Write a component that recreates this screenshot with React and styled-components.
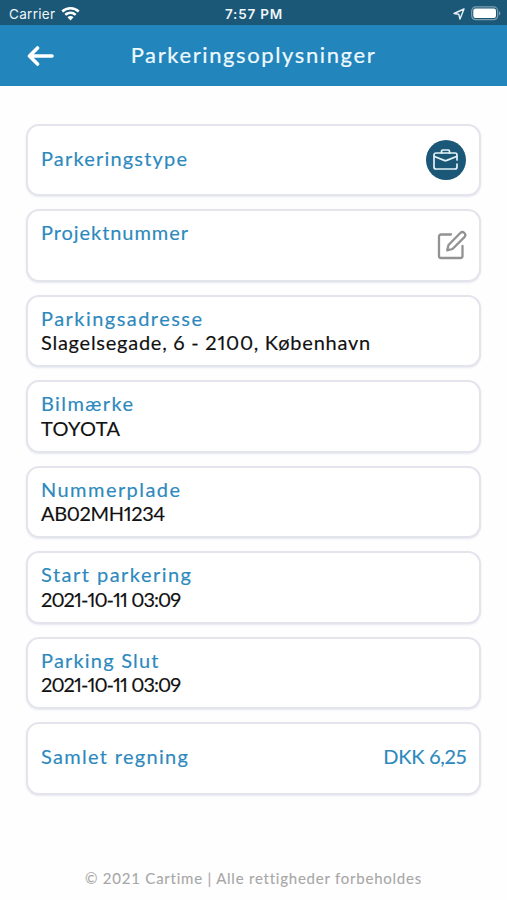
import React from 'react';
import styled, { createGlobalStyle } from 'styled-components';

const GlobalStyle = createGlobalStyle`
  * { box-sizing: border-box; }
  body { margin: 0; background: #fefefe; overflow: hidden; }
`;

const Screen = styled.div`
  display: flex;
  flex-direction: column;
  width: 507px;
  height: 900px;
  background: #fefefe;
  font-family: Lato, "Open Sans", sans-serif;
`;

const StatusBar = styled.div`
  display: grid;
  grid-template-columns: 1fr auto 1fr;
  align-items: center;
  height: 25px;
  padding: 2px 6px 0 9px;
  background: #1b5776;
  color: #eef6fa;
  font: 400 13.5px/20px Inter, "Liberation Sans", sans-serif;
`;

const StatusGroup = styled.div`
  display: flex;
  align-items: center;
  gap: 6px;
  justify-content: ${(p) => (p.$end ? 'flex-end' : 'flex-start')};
`;

const Carrier = styled.span`
  letter-spacing: 0.3px;
`;

const Clock = styled.span`
  font-weight: 600;
  font-size: 13.5px;
  letter-spacing: 0.8px;
  margin-right: 2px;
`;

const Header = styled.header`
  display: grid;
  grid-template-columns: 54px 1fr 54px;
  align-items: center;
  height: 61px;
  background: #2285bc;
  color: #eefaff;
`;

const BackButton = styled.button`
  display: flex;
  justify-content: flex-end;
  padding: 0;
  border: 0;
  background: none;
  color: #fff;
`;

const Title = styled.h1`
  margin: 0;
  padding-bottom: 2px;
  text-align: center;
  font-size: 22px;
  line-height: 26px;
  font-weight: 400;
  letter-spacing: 1.61px;
  white-space: nowrap;
  -webkit-text-stroke: 0.2px currentColor;
`;

const CardList = styled.main`
  display: flex;
  flex-direction: column;
  gap: 13px;
  padding: 37.9px 25.6px 0 26px;
`;

const Card = styled.section`
  display: flex;
  justify-content: space-between;
  height: 72.5px;
  padding: ${(p) => (p.$single ? '20px' : '9px')} 13px 0 13px;
  border: 2px solid #e4e4ec;
  border-radius: 13px;
  background: #fff;
  box-shadow: 0 1px 2px rgba(215, 215, 235, 0.6);
`;

const Field = styled.div`
  display: flex;
  flex-direction: column;
`;

const Text = styled.span`
  font-size: 20px;
  line-height: 24.5px;
  font-variant-numeric: proportional-nums;
  letter-spacing: ${(p) => p.$spacing}px;
  white-space: nowrap;
  -webkit-text-stroke: 0.15px currentColor;
`;

const Label = styled(Text)`
  color: #2d89bd;
`;

const Value = styled(Text)`
  color: #111;
`;

const Badge = styled.div`
  display: grid;
  place-items: center;
  width: 40px;
  height: 40px;
  margin: -6px 0.4px 0 0;
  border-radius: 50%;
  background: #1b5776;
`;

const EditButton = styled.button`
  display: flex;
  align-self: flex-start;
  margin: 10px -0.5px 0 0;
  padding: 0;
  border: 0;
  background: none;
`;

const Footer = styled.footer`
  margin-top: auto;
  padding-bottom: 12px;
  text-align: center;
  color: #a7a7a7;
  font-size: 15px;
  line-height: 20px;
  letter-spacing: 0.77px;
  white-space: nowrap;
  -webkit-text-stroke: 0.1px currentColor;
`;

const WifiIcon = () => (
  <svg width="19" height="14" viewBox="0 0 19 14" fill="#fff">
    <path d="M9.5 0C6 0 2.8 1.3.4 3.6l1.7 1.8a10.7 10.7 0 0 1 14.8 0l1.7-1.8A13.1 13.1 0 0 0 9.5 0Z" />
    <path d="M9.5 4.6c-2.3 0-4.4.9-6 2.3l1.7 1.8a6.4 6.4 0 0 1 8.6 0l1.7-1.8a8.9 8.9 0 0 0-6-2.3Z" />
    <path d="M9.5 9.1c-1.2 0-2.2.4-3 1.1l3 3.2 3-3.2c-.8-.7-1.8-1.1-3-1.1Z" />
  </svg>
);

const LocationIcon = () => (
  <svg width="12" height="12" viewBox="0 0 12 12" fill="none" stroke="#e5f2f8" strokeWidth="1.4" strokeLinejoin="round">
    <path d="M11 1 1 5.5l4.8.8L7 11Z" />
  </svg>
);

const BatteryIcon = () => (
  <svg width="30" height="15" viewBox="0 0 30 15">
    <rect x="0.7" y="0.9" width="26" height="12.8" rx="4" fill="none" stroke="#7f9fb0" strokeWidth="1.2" />
    <rect x="2.3" y="2.6" width="22.7" height="9.4" rx="2.2" fill="#fff" />
    <path d="M28 5.2c1.8.7 1.8 3.6 0 4.3Z" fill="#7f9fb0" />
  </svg>
);

const BackIcon = () => (
  <svg width="27" height="22" viewBox="0 0 27 22" fill="none" stroke="currentColor" strokeWidth="3.6" strokeLinecap="round" strokeLinejoin="round">
    <path d="M25 11H3M10.5 3 2.5 11l8 8" />
  </svg>
);

const BriefcaseIcon = () => (
  <svg width="26" height="22" viewBox="0 0 26 22" fill="none" stroke="#e4f3f8" strokeWidth="1.7" strokeLinecap="round" strokeLinejoin="round">
    <path d="M24 11V6a2 2 0 0 0-2-2H3a2 2 0 0 0-2 2v12a2 2 0 0 0 2 2h19a2 2 0 0 0 2-2v-3" />
    <path d="M8.5 4V2.3C8.5 1.6 9 1 9.8 1h5.4c.8 0 1.3.6 1.3 1.3V4" />
    <path d="m1.500 7.500 9.700 3.900a3.600 3.600 0 0 0 2.600 0l9.700-3.900" />
  </svg>
);

const EditIcon = () => (
  <svg width="30" height="30" viewBox="0 0 30 30" fill="none" stroke="#929292" strokeWidth="2.3" strokeLinecap="round" strokeLinejoin="round">
    <path d="M14 4.500H4A2 2 0 0 0 2 6.500v19.500a2 2 0 0 0 2 2h19.500a2 2 0 0 0 2-2V16" />
    <path d="M23.300 3a2.900 2.900 0 0 1 4.100 4.100L15.500 19l-5.300 1.300L11.500 15Z" />
  </svg>
);

const details = [
  { label: 'Parkingsadresse', spacing: 1.46, value: 'Slagelsegade, 6 - 2100, København', valueSpacing: 0.75 },
  { label: 'Bilmærke', spacing: 1.4, value: 'TOYOTA', valueSpacing: 0.31 },
  { label: 'Nummerplade', spacing: 1.44, value: 'AB02MH1234', valueSpacing: -0.36 },
  { label: 'Start parkering', spacing: 1.48, value: '2021-10-11 03:09', valueSpacing: -0.95 },
  { label: 'Parking Slut', spacing: 1.2, value: '2021-10-11 03:09', valueSpacing: -0.95 },
];

export default function App() {
  return (
    <Screen>
      <GlobalStyle />
      <StatusBar>
        <StatusGroup>
          <Carrier>Carrier</Carrier>
          <WifiIcon />
        </StatusGroup>
        <Clock>7:57 PM</Clock>
        <StatusGroup $end>
          <LocationIcon />
          <BatteryIcon />
        </StatusGroup>
      </StatusBar>
      <Header>
        <BackButton aria-label="Tilbage">
          <BackIcon />
        </BackButton>
        <Title>Parkeringsoplysninger</Title>
      </Header>
      <CardList>
        <Card $single>
          <Label $spacing={1.18}>Parkeringstype</Label>
          <Badge>
            <BriefcaseIcon />
          </Badge>
        </Card>
        <Card>
          <Label $spacing={0.93}>Projektnummer</Label>
          <EditButton aria-label="Rediger">
            <EditIcon />
          </EditButton>
        </Card>
        {details.map((item) => (
          <Card key={item.label}>
            <Field>
              <Label $spacing={item.spacing}>{item.label}</Label>
              <Value $spacing={item.valueSpacing}>{item.value}</Value>
            </Field>
          </Card>
        ))}
        <Card $single>
          <Label $spacing={1.31}>Samlet regning</Label>
          <Label $spacing={-0.2}>DKK 6,25</Label>
        </Card>
      </CardList>
      <Footer>© 2021 Cartime | Alle rettigheder forbeholdes</Footer>
    </Screen>
  );
}
